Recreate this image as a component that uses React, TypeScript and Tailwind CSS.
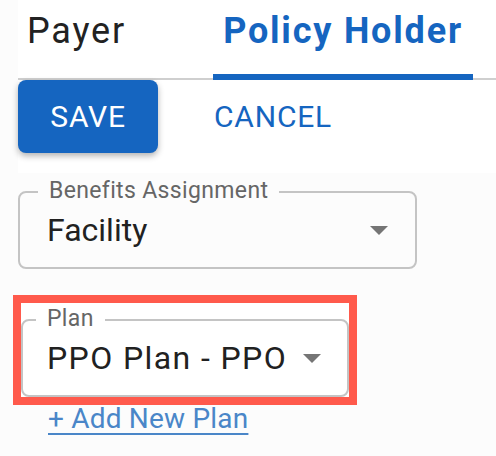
import React from "react";

const Caret = () => (
  <svg width="18" height="9" viewBox="0 0 18 9" className="shrink-0">
    <path d="M0 0 L18 0 L9 9 Z" fill="#757575" />
  </svg>
);

const App = () => {
  return (
    <div
      className="w-[496px] h-[456px] overflow-hidden bg-[#fcfcfc] text-[#212121]"
      style={{ fontFamily: "Roboto, 'Liberation Sans', sans-serif" }}
    >
      {/* Tabs */}
      <div className="ml-[18px] h-[80px] flex border-b-2 border-[#cfcfcf] bg-white">
        <div className="w-[195px] h-[78px] pl-[9px] pt-[11px] text-[36px] leading-[40px] tracking-[1.8px] text-[#222]">
          Payer
        </div>
        <div className="w-[260px] h-[80px] border-b-[6px] border-[#1565c0] pt-[11px] text-center text-[36px] leading-[40px] font-bold tracking-[1.8px] text-[#1565c0]">
          Policy Holder
        </div>
      </div>

      {/* Actions */}
      <div className="ml-[18px] h-[93px] bg-white flex items-start">
        <button className="w-[140px] h-[73px] rounded-[8px] bg-[#1565c0] text-white text-[30px] tracking-[0.8px] shadow-[0_3px_6px_rgba(0,0,0,0.3)]">
          SAVE
        </button>
        <button className="ml-[32px] h-[73px] px-[24px] text-[#1565c0] text-[30px] tracking-[0.8px]">
          CANCEL
        </button>
      </div>

      {/* Benefits Assignment */}
      <div className="mt-[18px] ml-[18px] w-[399px] h-[78px] relative rounded-[8px] border-2 border-[#c4c4c4] flex items-center justify-between pl-[27px] pr-[27px]">
        <span className="absolute left-[18px] -top-[14px] px-[11px] bg-[#fcfcfc] text-[23px] leading-[24px] text-[#666] tracking-[0.35px]">
          Benefits Assignment
        </span>
        <span className="text-[32px] leading-[38px]">Facility</span>
        <Caret />
      </div>

      {/* Plan (highlighted) */}
      <div className="mt-[26px] ml-[13px] w-[344px] border-[8px] border-[#ff5a4c] bg-white pt-[16px]">
        <div className="w-[328px] h-[78px] relative rounded-[8px] border-2 border-[#c4c4c4] flex items-center pl-[24px]">
          <span className="absolute left-[13px] -top-[14px] px-[11px] bg-white text-[23px] leading-[24px] text-[#666] tracking-[0.35px]">
            Plan
          </span>
          <span className="text-[32px] leading-[38px] tracking-[1.4px]">PPO Plan - PPO</span>
          <span className="ml-[16px]">
            <Caret />
          </span>
        </div>
      </div>

      {/* Link */}
      <a
        href="#"
        className="inline-block ml-[48px] text-[28px] leading-[28px] tracking-[0.2px] text-[#4a86c8] underline decoration-2 underline-offset-[5px]"
      >
        + Add New Plan
      </a>
    </div>
  );
};

export default App;
